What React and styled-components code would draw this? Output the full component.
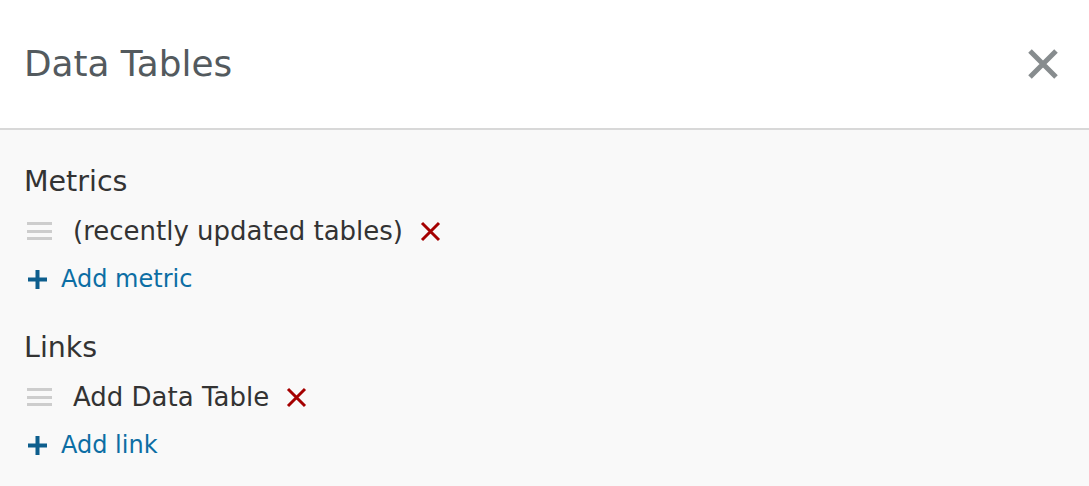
import React from "react";
import styled, { createGlobalStyle } from "styled-components";

const Global = createGlobalStyle`
  html, body { margin: 0; padding: 0; }
  body {
    font-family: "DejaVu Sans", Verdana, sans-serif;
    background: #f9f9f9;
  }
`;

const Panel = styled.div`
  width: 1089px;
  height: 486px;
  display: flex;
  flex-direction: column;
  background: #f9f9f9;
  overflow: hidden;
`;

const Header = styled.header`
  height: 128px;
  flex: none;
  display: flex;
  align-items: center;
  justify-content: space-between;
  padding: 0 24px;
  background: #ffffff;
  border-bottom: 2px solid #d8d8d8;
`;

const Title = styled.h1`
  margin: 0;
  font-weight: normal;
  font-size: 35.8px;
  color: #535a5e;
  padding-bottom: 2px;
`;

const CloseButton = styled.button`
  border: 0;
  background: none;
  padding: 0;
  width: 32px;
  height: 32px;
  display: flex;
  align-items: center;
  justify-content: center;
  margin-right: 6px;
  cursor: pointer;
`;

const Body = styled.main`
  padding: 32px 24px 0;
  display: flex;
  flex-direction: column;
  gap: 25px;
`;

const Section = styled.section`
  display: flex;
  flex-direction: column;
`;

const SectionTitle = styled.h2`
  margin: 0 0 5px;
  font-weight: normal;
  font-size: 28.5px;
  line-height: 40px;
  color: #333;
`;

const Row = styled.div`
  height: 48px;
  display: flex;
  align-items: center;
`;

const Handle = styled.span`
  width: 25px;
  height: 18px;
  margin-left: 3px;
  margin-right: 21px;
  display: flex;
  flex-direction: column;
  justify-content: space-between;
  span {
    height: 3px;
    background: #cdcdcd;
  }
`;

const ItemText = styled.span`
  font-size: 26px;
  color: #333;
`;

const RemoveButton = styled.button`
  border: 0;
  background: none;
  padding: 0;
  margin-left: 17px;
  width: 21px;
  height: 21px;
  display: flex;
  cursor: pointer;
`;

const AddLink = styled.a`
  display: flex;
  align-items: center;
  height: 48px;
  font-size: 24px;
  color: #0c6ea4;
  text-decoration: none;
  cursor: pointer;
  svg {
    margin-left: 4px;
    margin-right: 14px;
  }
`;

const CloseIcon = () => (
  <svg width="30" height="30" viewBox="0 0 30 30">
    <path d="M2 2 L28 28 M28 2 L2 28" stroke="#878c8e" strokeWidth="5" />
  </svg>
);

const RemoveIcon = () => (
  <svg width="21" height="21" viewBox="0 0 21 21">
    <path d="M2 2 L19 19 M19 2 L2 19" stroke="#a50000" strokeWidth="3" />
  </svg>
);

const PlusIcon = () => (
  <svg width="19" height="19" viewBox="0 0 19 19">
    <path d="M9.5 0 V19 M0 9.5 H19" stroke="#0d5e8d" strokeWidth="4" />
  </svg>
);

const ListSection = ({ title, item, addLabel }) => (
  <Section>
    <SectionTitle>{title}</SectionTitle>
    <Row>
      <Handle>
        <span />
        <span />
        <span />
      </Handle>
      <ItemText>{item}</ItemText>
      <RemoveButton aria-label="Remove">
        <RemoveIcon />
      </RemoveButton>
    </Row>
    <AddLink>
      <PlusIcon />
      {addLabel}
    </AddLink>
  </Section>
);

export default function App() {
  return (
    <>
      <Global />
      <Panel>
        <Header>
          <Title>Data Tables</Title>
          <CloseButton aria-label="Close">
            <CloseIcon />
          </CloseButton>
        </Header>
        <Body>
          <ListSection title="Metrics" item="(recently updated tables)" addLabel="Add metric" />
          <ListSection title="Links" item="Add Data Table" addLabel="Add link" />
        </Body>
      </Panel>
    </>
  );
}
